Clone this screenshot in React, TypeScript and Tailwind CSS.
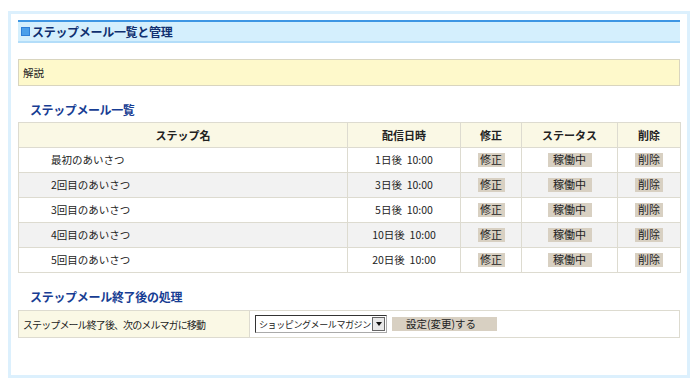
import React from "react";

const rows = [
  { name: "最初のあいさつ", when: "1日後", alt: false },
  { name: "2回目のあいさつ", when: "3日後", alt: true },
  { name: "3回目のあいさつ", when: "5日後", alt: false },
  { name: "4回目のあいさつ", when: "10日後", alt: true },
  { name: "5回目のあいさつ", when: "20日後", alt: false },
];

const font = {
  fontFamily: '"Noto Sans CJK JP", "Liberation Sans", sans-serif',
};

function TagButton({ label, width }: { label: string; width: string }) {
  return (
    <span
      className={`inline-flex h-[14px] items-center justify-center bg-[#d8d0c2] text-[11px] leading-none text-[#222] ${width}`}
    >
      {label}
    </span>
  );
}

export default function App() {
  return (
    <div className="h-[391px] w-[700px] bg-white pl-[8px] pt-[11px] text-[#222]" style={font}>
      <div className="h-[367px] w-[682px] border-[3px] border-[#dcf0fd] px-[7px] pt-[6px]">
        {/* title bar */}
        <div className="flex h-[23px] items-center border-t-2 border-b-2 border-t-[#3e96e3] border-b-[#b3ddf9] bg-[#d4effd] pl-[3px]">
          <span className="mr-[2px] inline-block h-[9px] w-[9px] border border-[#2f7fd8] bg-[#4a9fea]" />
          <span className="text-[12px] font-bold leading-none tracking-[-0.3px] text-[#0f2f70]">
            ステップメール一覧と管理
          </span>
        </div>

        {/* explanation */}
        <div className="mt-[16px] flex h-[27px] items-center border border-[#d9d5bf] bg-[#fef9cb] pl-[4px] text-[10.5px]">
          解説
        </div>

        {/* step list */}
        <div className="flex h-[36px] items-end pb-[3px] pl-[12px] text-[12px] font-bold tracking-[-0.4px] text-[#173d93]">
          ステップメール一覧
        </div>
        <table className="w-[662px] table-fixed border-collapse text-[10.5px]">
          <colgroup>
            <col className="w-[329px]" />
            <col className="w-[113px]" />
            <col className="w-[61px]" />
            <col className="w-[96px]" />
            <col className="w-[63px]" />
          </colgroup>
          <thead>
            <tr className="h-[25px] bg-[#faf8e5] text-[11px] font-bold">
              <th className="border border-[#dddbd0]">ステップ名</th>
              <th className="border border-[#dddbd0]">配信日時</th>
              <th className="border border-[#dddbd0]">修正</th>
              <th className="border border-[#dddbd0]">ステータス</th>
              <th className="border border-[#dddbd0]">削除</th>
            </tr>
          </thead>
          <tbody>
            {rows.map((r) => (
              <tr key={r.name} className={`h-[25px] ${r.alt ? "bg-[#f2f2f2]" : "bg-white"}`}>
                <td className="border border-[#dddbd0] pl-[32px]">{r.name}</td>
                <td className="border border-[#dddbd0] text-center">
                  {r.when}&nbsp;&nbsp;10:00
                </td>
                <td className="border border-[#dddbd0] text-center">
                  <TagButton label="修正" width="w-[27px]" />
                </td>
                <td className="border border-[#dddbd0] text-center">
                  <TagButton label="稼働中" width="w-[44px]" />
                </td>
                <td className="border border-[#dddbd0] text-center">
                  <TagButton label="削除" width="w-[28px]" />
                </td>
              </tr>
            ))}
          </tbody>
        </table>

        {/* after-finish */}
        <div className="flex h-[37px] items-end pb-[4px] pl-[12px] text-[12px] font-bold tracking-[-0.3px] text-[#173d93]">
          ステップメール終了後の処理
        </div>
        <div className="flex h-[28px] w-[662px] border border-[#dddbd0] text-[10.5px]">
          <div className="flex w-[231px] items-center whitespace-nowrap border-r border-[#dddbd0] bg-[#faf8e5] pl-[4px] text-[10px] tracking-[-0.9px]">
            ステップメール終了後、次のメルマガに移動
          </div>
          <div className="flex flex-1 items-center bg-white pl-[5px]">
            <div className="flex h-[18px] w-[132px] items-center justify-between overflow-hidden whitespace-nowrap border border-t-[#333] border-l-[#333] border-r-[#aaa] border-b-[#aaa] bg-white pl-[3px] pr-[1px]">
              <span className="text-[9px] leading-none tracking-[-0.4px]">ショッピングメールマガジン</span>
              <span className="flex h-[14px] w-[13px] shrink-0 items-center justify-center border border-[#666] bg-[#e8e8e8]">
                <span className="h-0 w-0 border-x-[3px] border-t-[4px] border-x-transparent border-t-[#111]" />
              </span>
            </div>
            <span className="ml-[5px] flex h-[14px] w-[105px] items-center whitespace-nowrap bg-[#d8d0c2] pl-[14px] text-[10.5px] leading-none">
              設定(変更)する
            </span>
          </div>
        </div>
      </div>
    </div>
  );
}
